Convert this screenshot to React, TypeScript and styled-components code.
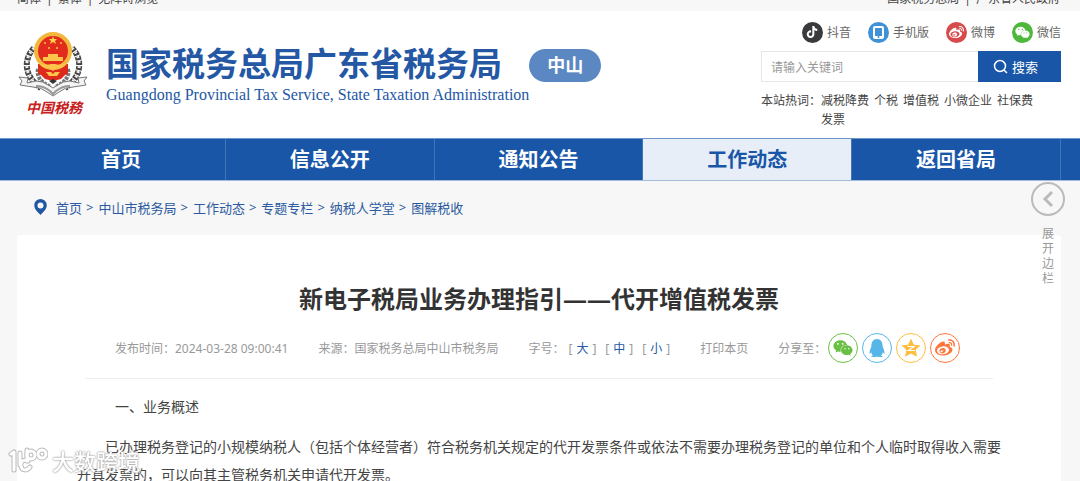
import React from "react";
import styled, { createGlobalStyle } from "styled-components";
import { FaTiktok, FaWeibo, FaWeixin, FaQq } from "react-icons/fa";

const Global = createGlobalStyle`
  * { box-sizing: border-box; }
  html { background: #f7f7f7; scrollbar-width: none; }
  body {
    margin: 0;
    font-family: "Noto Sans", "Noto Sans CJK SC", sans-serif;
    font-size: 12px;
    color: #444;
  }
  a { color: inherit; text-decoration: none; }
  button, input { font: inherit; }
  button { cursor: pointer; }
  h1, h2, p { margin: 0; }
`;

const Page = styled.div`
  position: relative;
  min-height: 100vh;
  background: #f7f7f7;
`;

const TopBar = styled.div`
  height: 11px;
  padding: 0 20px 6px 17px;
  display: flex;
  align-items: flex-end;
  justify-content: space-between;
  overflow: hidden;
  line-height: 20px;
  color: #444;
`;

const TopLinks = styled.div`
  display: flex;
  gap: 5px;
  height: 16px;
`;

const Header = styled.header`
  display: flex;
  justify-content: space-between;
  background: #fff;
  padding: 10px 19px 9px 17px;
`;

const Brand = styled.a`
  display: flex;
  align-items: flex-start;
  color: #2457a4;
`;

const Logo = styled.div`
  display: flex;
  flex-direction: column;
  align-items: center;
  width: 74px;
  padding-top: 10px;
`;

const LogoText = styled.span`
  color: #c8201c;
  font-family: "Liberation Serif", "Noto Sans CJK SC", serif;
  font-size: 14px;
  font-style: italic;
  font-weight: 700;
  line-height: 20px;
`;

const BrandText = styled.div`
  margin: 26px 0 0 15px;
`;

const BrandName = styled.div`
  font-size: 33px;
  line-height: 34px;
  font-weight: 700;
  white-space: nowrap;
`;

const BrandSub = styled.div`
  margin-top: 4px;
  font-family: "Liberation Serif", serif;
  font-size: 16px;
  line-height: 20px;
  white-space: nowrap;
`;

const City = styled.span`
  margin-top: 28px;
  width: 72px;
  height: 33px;
  border-radius: 17px;
  background: #5b88c3;
  color: #fff;
  font-size: 18px;
  font-weight: 700;
  line-height: 33px;
  text-align: center;
`;

const Tools = styled.div`
  width: 300px;
  flex: none;
`;

const Channels = styled.div`
  display: flex;
  justify-content: flex-end;
  gap: 17px;
  height: 22px;
`;

const Channel = styled.a`
  display: flex;
  align-items: center;
  gap: 4px;
  color: #666;
`;

const Dot = styled.span<{ $color: string }>`
  width: 21px;
  height: 21px;
  border-radius: 50%;
  background: ${(p) => p.$color};
  color: #fff;
  display: flex;
  align-items: center;
  justify-content: center;
`;

const Search = styled.form`
  display: flex;
  height: 31px;
  margin-top: 8px;
`;

const SearchInput = styled.input`
  flex: 1;
  min-width: 0;
  padding: 2px 9px 0;
  border: 1px solid #e6e6e6;
  border-right: 0;
  outline: 0;
  background: #fff;
  &::placeholder { color: #999; opacity: 1; }
`;

const SearchButton = styled.button`
  width: 83px;
  padding: 0 8px 0 0;
  border: 0;
  background: #1956a8;
  color: #fff;
  font-size: 13px;
  display: flex;
  align-items: center;
  justify-content: center;
  gap: 4px;
`;

const Hot = styled.div`
  display: flex;
  margin-top: 9px;
  line-height: 19px;
  white-space: nowrap;
`;

const HotWords = styled.div`
  display: flex;
  flex-wrap: wrap;
  column-gap: 5px;
  padding-right: 20px;
`;

const Nav = styled.nav`
  display: flex;
  height: 43px;
  padding: 0 19px 0 17px;
  background: #1956a8;
  border-top: 1px solid #6d95c9;
  border-bottom: 1px solid #a3bcdd;
`;

const NavItem = styled.a<{ $active?: boolean }>`
  flex: 1;
  border-right: 1px solid #4275b8;
  background: ${(p) => (p.$active ? "#e7eef8" : "transparent")};
  color: ${(p) => (p.$active ? "#1956a8" : "#fff")};
  font-size: 20px;
  font-weight: 700;
  line-height: 42px;
  text-align: center;
`;

const Crumbs = styled.nav`
  display: flex;
  align-items: center;
  height: 54px;
  padding: 0 34px 2px;
  color: #2c5aa0;
  font-size: 13px;
  svg { margin-right: 9px; }
`;

const Separator = styled.span`
  margin: 0 5px 0 4px;
`;

const Article = styled.article`
  margin: 0 19px 0 17px;
  border-radius: 4px;
  background: #fff;
  padding-top: 46px;
`;

const Title = styled.h1`
  color: #333;
  font-size: 24px;
  font-weight: 700;
  line-height: 36px;
  text-align: center;
`;

const Meta = styled.div`
  display: flex;
  align-items: center;
  gap: 30px;
  height: 62px;
  margin: 0 68px;
  padding-left: 30px;
  border-bottom: 1px solid #eee;
  color: #999;
  white-space: nowrap;
`;

const Sizes = styled.div`
  display: flex;
  gap: 4px;
`;

const SizeList = styled.div`
  display: flex;
  gap: 9px;
`;

const Plain = styled.button`
  padding: 0;
  border: 0;
  background: none;
  color: #999;
`;

const SizeButton = styled(Plain)`
  margin: 0 4px;
  color: #2457a4;
`;

const Share = styled.div`
  display: flex;
  align-items: center;
  gap: 4px;
`;

const ShareLabel = styled.span`
  width: 46px;
`;

const ShareLink = styled.a<{ $color: string }>`
  width: 30px;
  height: 30px;
  border: 1px solid ${(p) => p.$color};
  border-radius: 50%;
  color: ${(p) => p.$color};
  display: flex;
  align-items: center;
  justify-content: center;
`;

const Body = styled.div`
  padding: 14px 60px 0;
  font-size: 14px;
  line-height: 28px;
`;

const Heading = styled.h2`
  padding-left: 38px;
  font-size: 14px;
  font-weight: 400;
  margin-bottom: 12px;
`;

const Para = styled.p`
  text-indent: 2em;
`;

const Side = styled.button`
  position: absolute;
  top: 182px;
  right: 15px;
  width: 34px;
  padding: 0;
  border: 0;
  background: none;
  color: #999;
  display: flex;
  flex-direction: column;
  align-items: center;
  gap: 10px;
`;

const SideText = styled.span`
  width: 12px;
  line-height: 15px;
`;

const Watermark = styled.div`
  position: fixed;
  left: 8px;
  bottom: 4px;
  display: flex;
  align-items: center;
  gap: 4px;
  color: #fff;
  font-size: 22px;
  font-weight: 500;
  line-height: 32px;
  text-shadow: 0 0 2px #999, 0 0 2px #aaa;
`;

const Emblem = () => (
  <svg width="74" height="68" viewBox="0 0 74 68" aria-hidden="true">
    <g fill="none">
      <path d="M17 17C6 28 7 46 24 57M55 17c11 11 10 29-7 40" stroke="#444" strokeWidth="6" strokeDasharray="4 1" />
      <path d="M17 17C6 28 7 46 24 57M55 17c11 11 10 29-7 40" stroke="#eee" strokeWidth="3" strokeDasharray="2 3" />
      <path d="M21 38c-2 8 4 14 13 18M51 38c2 8-4 14-13 18" stroke="#777" strokeWidth="4" strokeDasharray="3 1" />
    </g>
    <path d="M21 33h30v10l-3 1-4 4-8 2-8-2-4-4-3-1z" fill="#dd2a1b" />
    <circle cx="36" cy="20" r="17" fill="#e22b1c" stroke="#f3b83b" strokeWidth="4" />
    <path d="M36 5l1 3h3l-2 2 1 3-3-2-3 2 1-3-2-2h3z" fill="#ffd24a" />
    <g fill="#ffc54a">
      <circle cx="28" cy="12" r="1" /><circle cx="44" cy="12" r="1" />
      <circle cx="32" cy="17" r="1" /><circle cx="40" cy="17" r="1" />
      <path d="M31 23h10v3h5v4H26v-4h5z" />
      <path d="M22 32q7 3 12 1h4q5 2 12-1-3 6-10 5l-4 3-4-3q-7 1-10-5zM29 41h5l2 2 2-2h5l-3 4h-8z" />
    </g>
    <path d="M2 46l9 1-1 5 9-2q7 0 12 4l5 3 5-3q5-4 12-4l9 2-1-5 9-1-3 4 2 4-13 2q-8 0-14 5l-6 4-6-4q-6-5-14-5L3 54l2-4z" fill="#f4f4f4" stroke="#777" />
    <path d="M19 55q8 0 14 5l3 3 3-3q6-5 14-5" fill="none" stroke="#999" strokeWidth="2" />
    <path d="M32 50l4 3 4-3-4-2z" fill="#333" />
  </svg>
);

const Pin = () => (
  <svg width="13" height="16" viewBox="0 0 26 32" aria-hidden="true">
    <path fill="#1f57a5" fillRule="evenodd" d="M13 0A12.500 12.500 0 0 0 .5 12.500C.5 20 7 26 13 32c6-6 12.500-12 12.500-19.500A12.500 12.500 0 0 0 13 0zm0 7a6 6 0 1 1 0 12 6 6 0 0 1 0-12z" />
  </svg>
);

const Tablet = () => (
  <svg width="11" height="13" viewBox="0 0 11 13" aria-hidden="true">
    <rect x="1" y="1" width="9" height="11" rx="1" fill="none" stroke="#fff" strokeWidth="2" />
    <path d="M1 10h9v2H1z" fill="#fff" />
    <circle cx="5.500" cy="11" r="1" fill="#3f92d6" />
  </svg>
);

const Qzone = () => (
  <svg width="20" height="20" viewBox="0 0 20 20" aria-hidden="true">
    <path fill="#fdbe3d" stroke="#fdbe3d" strokeLinejoin="round" d="M10 1.500l2.500 5.700 6.100.6-4.600 4.100 1.400 6.100L10 14.900 4.600 18 6 11.900 1.400 7.800l6.100-.6z" />
    <path d="M6.500 8.500h6.500l-5.500 4h6.500" fill="none" stroke="#fff" strokeWidth="1.200" />
  </svg>
);

const WatermarkLogo = () => (
  <svg width="40" height="30" viewBox="0 0 40 30" fill="none" strokeLinecap="round" strokeLinejoin="round" aria-hidden="true">
    {[{ c: "#bbb", w: 5 }, { c: "#fff", w: 3 }].map((s) => (
      <g key={s.c} stroke={s.c} strokeWidth={s.w}>
        <path d="M3 8l3-2v18" />
        <path d="M12 7v12M20 15c-5-2-8 1-7 5 1 5 6 5 9 1" />
        <path d="M19 4v11" />
        <circle cx="23" cy="9" r="4" />
        <circle cx="34" cy="8" r="4" />
      </g>
    ))}
  </svg>
);

const channels = [
  { name: "抖音", color: "#3a3a3c", icon: <FaTiktok size={12} /> },
  { name: "手机版", color: "#3f92d6", icon: <Tablet /> },
  { name: "微博", color: "#d84b4b", icon: <FaWeibo size={15} /> },
  { name: "微信", color: "#4db83c", icon: <FaWeixin size={15} /> },
];
const navItems = ["首页", "信息公开", "通知公告", "工作动态", "返回省局"];
const crumbs = ["首页", "中山市税务局", "工作动态", "专题专栏", "纳税人学堂", "图解税收"];
const hotWords = ["减税降费", "个税", "增值税", "小微企业", "社保费", "发票"];
const shares = [
  { name: "微信", color: "#6cbf45", icon: <FaWeixin size={20} /> },
  { name: "QQ", color: "#56b6e7", icon: <FaQq size={18} /> },
  { name: "QQ空间", color: "#fdbe3d", icon: <Qzone /> },
  { name: "微博", color: "#ff763b", icon: <FaWeibo size={20} /> },
];

export default function App() {
  return (
    <Page>
      <Global />
      <TopBar>
        <TopLinks><a href="#">简体</a>|<a href="#">繁体</a>|<a href="#">无障碍浏览</a></TopLinks>
        <TopLinks><a href="#">国家税务总局</a>|<a href="#">广东省人民政府</a></TopLinks>
      </TopBar>
      <Header>
        <Brand href="#">
          <Logo>
            <Emblem />
            <LogoText>中国税務</LogoText>
          </Logo>
          <BrandText>
            <BrandName>国家税务总局广东省税务局</BrandName>
            <BrandSub>Guangdong Provincial Tax Service, State Taxation Administration</BrandSub>
          </BrandText>
          <City>中山</City>
        </Brand>
        <Tools>
          <Channels>
            {channels.map((c) => (
              <Channel href="#" key={c.name}><Dot $color={c.color}>{c.icon}</Dot>{c.name}</Channel>
            ))}
          </Channels>
          <Search>
            <SearchInput aria-label="搜索关键词" placeholder="请输入关键词" />
            <SearchButton type="button">
              <svg width="15" height="15" viewBox="0 0 15 15" fill="none" stroke="#fff" strokeWidth="1.500"><circle cx="7" cy="7" r="5.500" /><path d="M11 11l3 3" /></svg>
              搜索
            </SearchButton>
          </Search>
          <Hot>
            <span>本站热词：</span>
            <HotWords>{hotWords.map((w) => <a href="#" key={w}>{w}</a>)}</HotWords>
          </Hot>
        </Tools>
      </Header>
      <Nav>
        {navItems.map((n) => <NavItem href="#" key={n} $active={n === "工作动态"}>{n}</NavItem>)}
      </Nav>
      <Crumbs>
        <Pin />
        {crumbs.map((c, i) => (
          <React.Fragment key={c}>{i > 0 && <Separator>&gt;</Separator>}<a href="#">{c}</a></React.Fragment>
        ))}
      </Crumbs>
      <Article>
        <Title>新电子税局业务办理指引——代开增值税发票</Title>
        <Meta>
          <span>发布时间：2024-03-28 09:00:41</span>
          <span>来源：国家税务总局中山市税务局</span>
          <Sizes>
            <span>字号：</span>
            <SizeList>
              {["大", "中", "小"].map((s) => <span key={s}>[<SizeButton>{s}</SizeButton>]</span>)}
            </SizeList>
          </Sizes>
          <Plain>打印本页</Plain>
          <Share>
            <ShareLabel>分享至：</ShareLabel>
            {shares.map((s) => (
              <ShareLink href="#" key={s.name} aria-label={s.name} $color={s.color}>{s.icon}</ShareLink>
            ))}
          </Share>
        </Meta>
        <Body>
          <Heading>一、业务概述</Heading>
          <Para>已办理税务登记的小规模纳税人（包括个体经营者）符合税务机关规定的代开发票条件或依法不需要办理税务登记的单位和个人临时取得收入需要开具发票的，可以向其主管税务机关申请代开发票。</Para>
        </Body>
      </Article>
      <Side>
        <svg width="34" height="34" viewBox="0 0 34 34" fill="none" stroke="#bbb" strokeWidth="2"><circle cx="17" cy="17" r="16" /><path d="M21 10l-7 7 7 7" strokeWidth="3" /></svg>
        <SideText>展开边栏</SideText>
      </Side>
      <Watermark><WatermarkLogo />大数跨境</Watermark>
    </Page>
  );
}
